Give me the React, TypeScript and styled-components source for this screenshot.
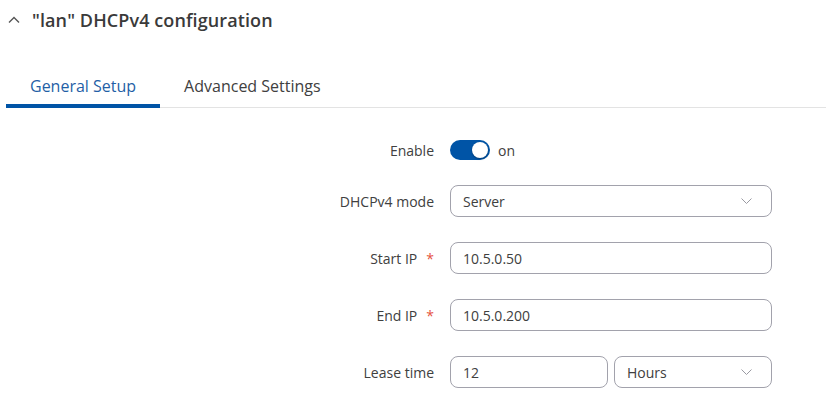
import React from "react";
import styled, { createGlobalStyle } from "styled-components";

const Global = createGlobalStyle`
  html, body { margin: 0; padding: 0; background: #fff; }
  body { font-family: "Open Sans", "Noto Sans", sans-serif; color: #404040; }
  * { box-sizing: border-box; }
`;

const Page = styled.div`
  width: 826px;
  height: 420px;
  background: #fff;
  overflow: hidden;
`;

const Header = styled.div`
  display: flex;
  align-items: center;
  gap: 12px;
  height: 40px;
  padding-left: 8px;
`;

const Title = styled.h2`
  margin: 0;
  font-size: 18px;
  font-weight: 600;
  color: #3a3a3a;
  letter-spacing: 0.1px;
`;

const TabList = styled.div`
  display: flex;
  margin: 27px 0 0 6px;
  border-bottom: 1px solid #e3e3e3;
`;

const Tab = styled.div<{ $active?: boolean }>`
  padding: 8px 24px 7px;
  margin-bottom: -1px;
  font-size: 16px;
  line-height: 22px;
  color: ${(p) => (p.$active ? "#1f5fa6" : "#404040")};
  border-bottom: 4px solid ${(p) => (p.$active ? "#0054a6" : "transparent")};
`;

const Form = styled.div`
  display: flex;
  flex-direction: column;
  gap: 25px;
  padding-top: 32px;
`;

const Row = styled.div`
  display: grid;
  grid-template-columns: 434px 322px;
  column-gap: 16px;
  align-items: center;
`;

const Label = styled.div`
  text-align: right;
  font-size: 14px;
  color: #404040;
`;

const Req = styled.span`
  color: #e5533d;
  margin-left: 9px;
`;

const ToggleWrap = styled.div`
  display: flex;
  align-items: center;
  gap: 8px;
  height: 20px;
  font-size: 14px;
`;

const Switch = styled.div`
  position: relative;
  width: 40px;
  height: 20px;
  border-radius: 10px;
  background: #0054a6;
`;

const Knob = styled.div`
  position: absolute;
  right: 2px;
  top: 2px;
  width: 16px;
  height: 16px;
  border-radius: 50%;
  background: #fff;
  box-shadow: 0 1px 2px rgba(0, 0, 0, 0.3);
`;

const Field = styled.div`
  position: relative;
  display: flex;
  align-items: center;
  height: 32px;
  padding: 0 12px;
  border: 1px solid #a2a2ac;
  border-radius: 8px;
  font-size: 14px;
  color: #404040;
  background: #fff;
`;

const Split = styled.div`
  display: grid;
  grid-template-columns: 158px 158px;
  column-gap: 6px;
`;

const Chevron = styled.svg`
  position: absolute;
  right: 19px;
  top: 50%;
  margin-top: -3px;
`;

const Down = () => (
  <Chevron width="11" height="6" viewBox="0 0 11 6">
    <path d="M0.5 0.5 L5.5 5.5 L10.5 0.5" fill="none" stroke="#9a9aa2" strokeWidth="1" />
  </Chevron>
);

export default function App() {
  return (
    <Page>
      <Global />
      <Header>
        <svg width="12" height="8" viewBox="0 0 12 8">
          <path d="M1 6.5 L6 1.5 L11 6.5" fill="none" stroke="#555" strokeWidth="1.4" />
        </svg>
        <Title>"lan" DHCPv4 configuration</Title>
      </Header>
      <TabList>
        <Tab $active>General Setup</Tab>
        <Tab>Advanced Settings</Tab>
      </TabList>
      <Form>
        <Row>
          <Label>Enable</Label>
          <ToggleWrap>
            <Switch>
              <Knob />
            </Switch>
            on
          </ToggleWrap>
        </Row>
        <Row>
          <Label>DHCPv4 mode</Label>
          <Field>
            Server
            <Down />
          </Field>
        </Row>
        <Row>
          <Label>
            Start IP<Req>*</Req>
          </Label>
          <Field>10.5.0.50</Field>
        </Row>
        <Row>
          <Label>
            End IP<Req>*</Req>
          </Label>
          <Field>10.5.0.200</Field>
        </Row>
        <Row>
          <Label>Lease time</Label>
          <Split>
            <Field>12</Field>
            <Field>
              Hours
              <Down />
            </Field>
          </Split>
        </Row>
      </Form>
    </Page>
  );
}
